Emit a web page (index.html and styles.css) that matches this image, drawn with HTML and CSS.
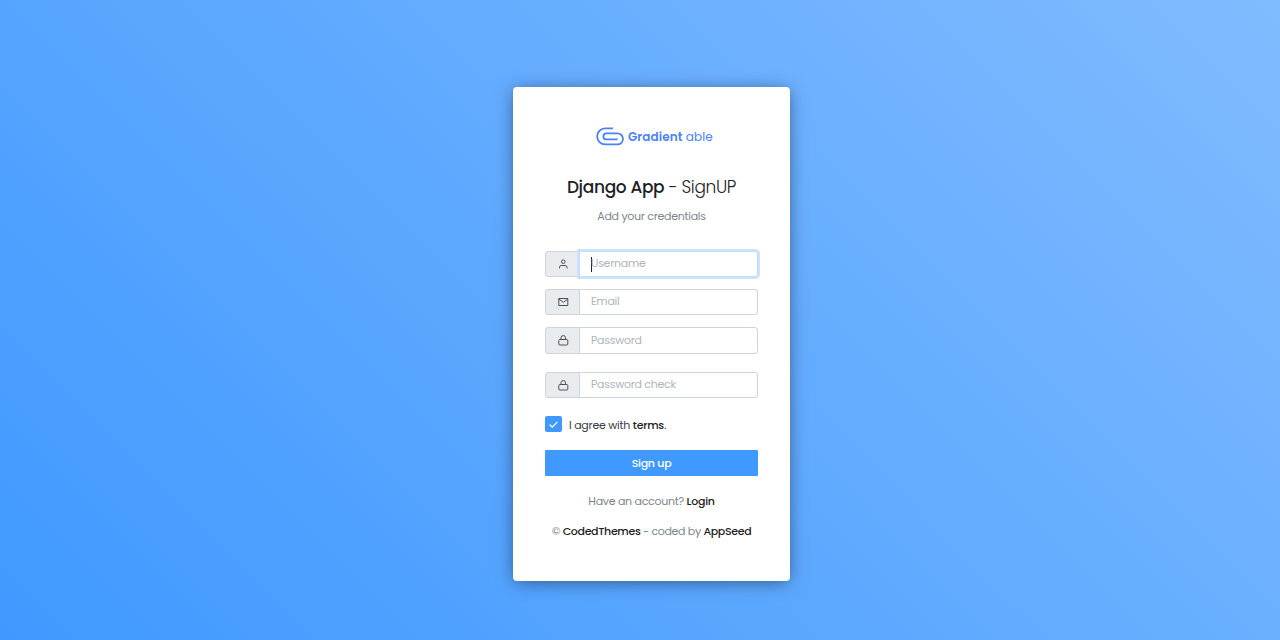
FILE: index.html
```html
<!DOCTYPE html>
<html lang="en">
<head>
<meta charset="utf-8">
<title>Django App - SignUP</title>
<link rel="stylesheet" href="styles.css">
</head>
<body>
<main class="auth">
  <form class="card">
    <div class="logo">
      <svg width="28" height="19" viewBox="0 0 28 19" fill="none" stroke="#4a82fb" stroke-width="1.8">
        <path d="M17 1.400H9.200a8 8 0 0 0 0 16H21.500a5.500 5.500 0 0 0 0-11H10.400a3 3 0 0 0 0 6h11.200"/>
      </svg>
      <span class="brand"><b>Gradient</b> able</span>
    </div>
    <h1 class="title"><b>Django App</b> <span>- SignUP</span></h1>
    <p class="subtitle">Add your credentials</p>
    <div class="group focused">
      <span class="addon"><svg class="icon" viewBox="0 0 11 11"><path d="M1.500 9.500V8.300a1.800 1.800 0 0 1 1.800-1.800h3.900A1.800 1.800 0 0 1 9 8.300v1.200"/><circle cx="5.250" cy="2.700" r="1.800"/></svg></span>
      <div class="input"><i class="caret"></i><span>Username</span></div>
    </div>
    <div class="group">
      <span class="addon"><svg class="icon" viewBox="0 0 11 11"><path d="M.8 1.500h9v7h-9zM.8 2l4.500 3.300L9.800 2"/></svg></span>
      <div class="input"><span>Email</span></div>
    </div>
    <div class="group password">
      <span class="addon"><svg class="icon" viewBox="0 0 11 11"><rect x=".8" y="4.500" width="9" height="5.500" rx="1"/><path d="M3 4.500V2.800a2.250 2.250 0 0 1 4.500 0v1.700"/></svg></span>
      <div class="input"><span>Password</span></div>
    </div>
    <div class="group last">
      <span class="addon"><svg class="icon" viewBox="0 0 11 11"><rect x=".8" y="4.500" width="9" height="5.500" rx="1"/><path d="M3 4.500V2.800a2.250 2.250 0 0 1 4.500 0v1.700"/></svg></span>
      <div class="input"><span>Password check</span></div>
    </div>
    <div class="agree">
      <span class="check"><svg width="9" height="7" viewBox="0 0 9 7" fill="none" stroke="#fff" stroke-width="1.2"><path d="M.6 3.500l2.600 2.600L8.400.8"/></svg></span>
      <span class="terms">I agree with <b>terms</b>.</span>
    </div>
    <div class="button">Sign up</div>
    <p class="account">Have an account? <b>Login</b></p>
    <p class="credit">© <b>CodedThemes</b> - coded by <b>AppSeed</b></p>
  </form>
</main>
</body>
</html>
```
FILE: styles.css
```css
* { box-sizing: border-box; }
body {
  margin: 0;
  font: 400 11px/16px Poppins, Inter, sans-serif;
  letter-spacing: -.28px;
  color: #37404a;
  background: linear-gradient(45deg, #4099ff, #80bbff);
}
b { font-weight: 500; color: #1d2125; }
.auth { height: 640px; padding: 87px 0 0 513px; }
.card {
  display: flex;
  flex-direction: column;
  width: 277px;
  height: 494px;
  padding: 39px 32px 0;
  background: #fff;
  border-radius: 4px;
  box-shadow: 0 2px 18px -2px rgba(0, 0, 0, .5);
  white-space: nowrap;
}
.logo { display: flex; gap: 4px; height: 20px; padding-left: 51px; align-items: center; color: #4a82fb; }
.logo svg { flex: none; }
.brand { padding-top: 1px; font-size: 12px; letter-spacing: .1px; }
.brand b { color: inherit; font-weight: 600; }
.title { margin: 29px 0 0; font-size: 17px; line-height: 24px; font-weight: 300; letter-spacing: -.34px; text-align: center; color: #1d2125; }
.subtitle { margin: 9px 0 0; height: 16px; text-align: center; color: #7c858d; }
.group { display: flex; height: 26px; margin-top: 12px; }
.group.focused { margin-top: 27px; }
.group.password { height: 27px; }
.group.last { margin-top: 18px; }
.addon {
  display: flex;
  align-items: center;
  justify-content: center;
  width: 35px;
  border: 1px solid #ced4da;
  border-radius: 3px 0 0 3px;
  background: #e9ecef;
}
.icon { width: 11px; height: 11px; margin-left: 1px; fill: none; stroke: #495057; stroke-width: 1; }
.input {
  display: flex;
  align-items: center;
  width: 179px;
  margin-left: -1px;
  padding: 0 0 2px 11px;
  border: 1px solid #ced4da;
  border-radius: 0 3px 3px 0;
  background: #fff;
  color: #adb5bd;
}
.password .input { padding-bottom: 1px; }
.focused .input { border-color: #c0dcff; box-shadow: 0 0 0 2px #cce3ff; z-index: 1; }
.caret { width: 1px; height: 15px; margin: 2px -1px 0 0; background: #222; }
.agree { display: flex; gap: 7px; height: 17px; margin-top: 18px; }
.check { display: flex; align-items: center; justify-content: center; width: 17px; height: 16px; border-radius: 2px; background: #4099ff; }
.terms { padding-top: 1px; letter-spacing: -.24px; }
.button { height: 26px; margin-top: 17px; border-radius: 1px; background: #4099ff; color: #fff; font-weight: 500; line-height: 26px; text-align: center; }
.account, .credit { margin: 17px 0 0; text-align: center; color: #7c858d; }
.credit { margin-top: 14px; letter-spacing: -.33px; }
```
